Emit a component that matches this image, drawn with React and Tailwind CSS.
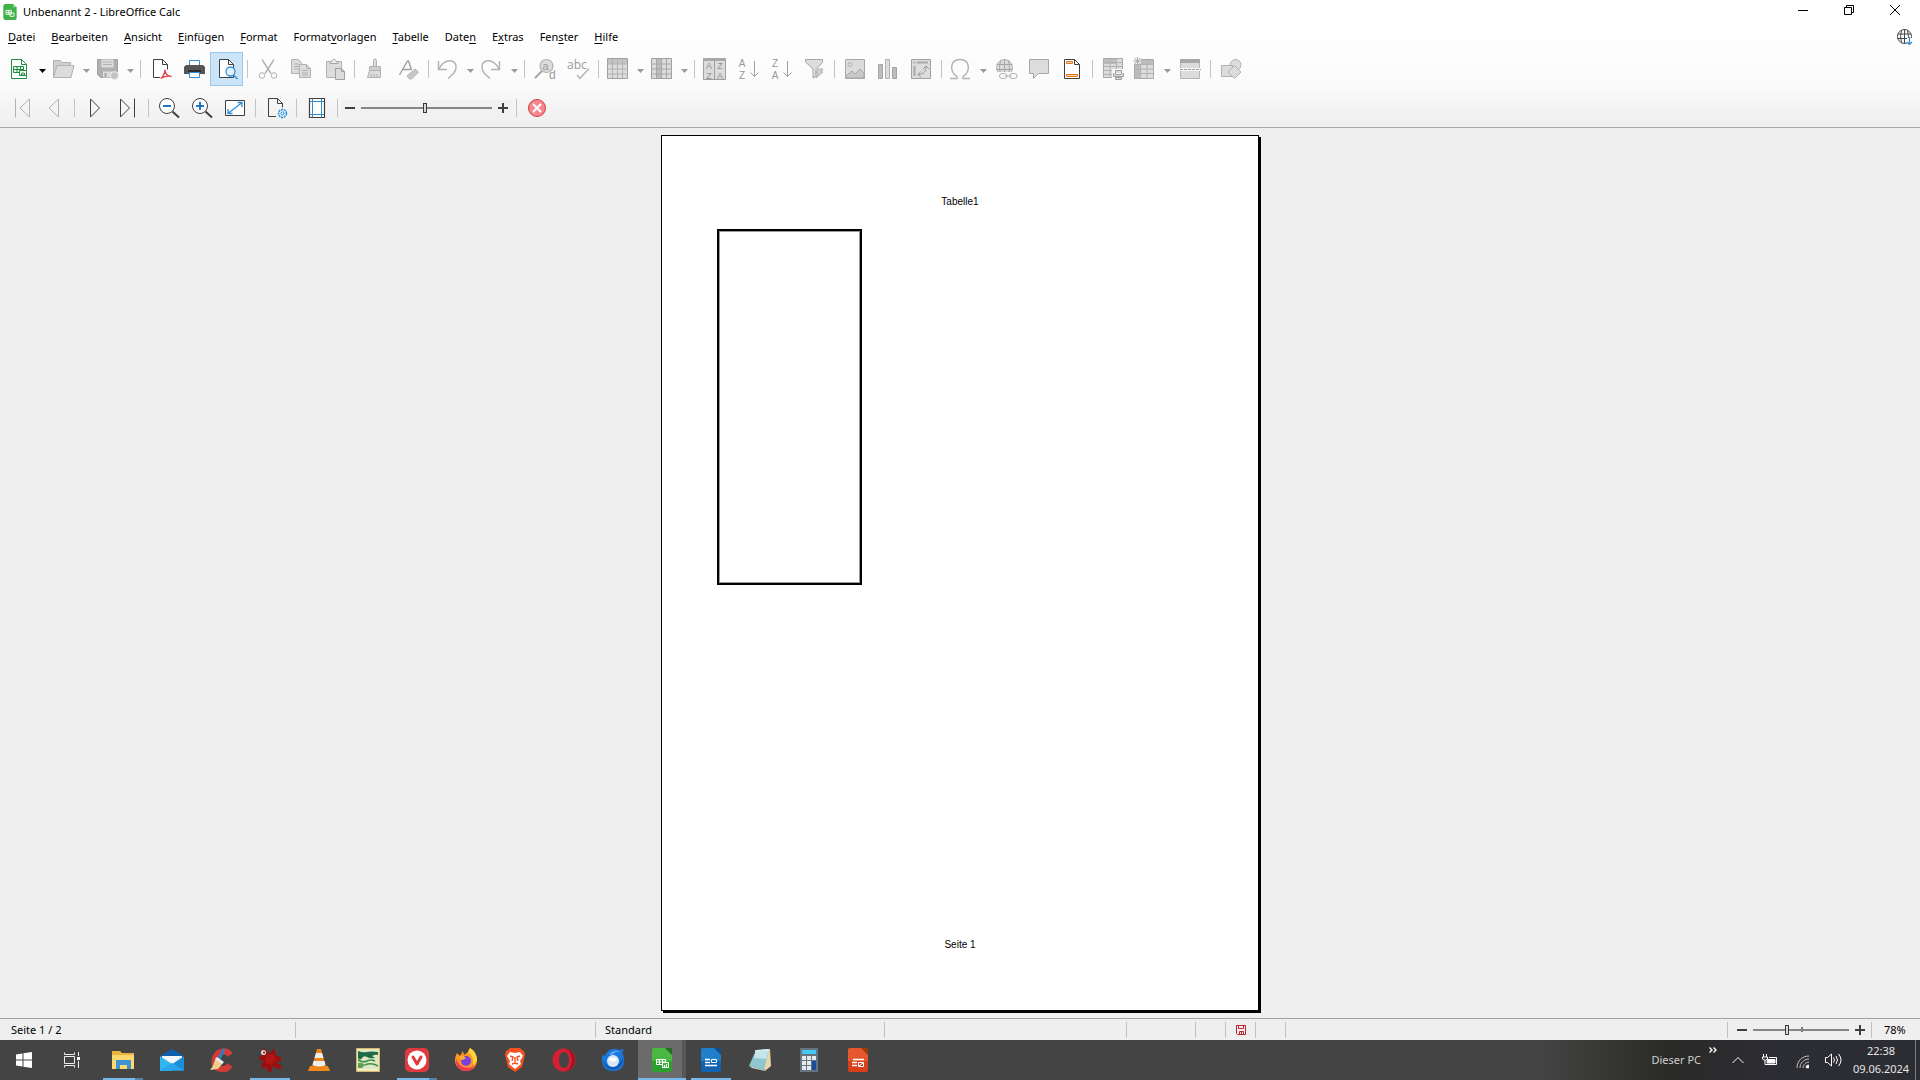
import React, { useState } from 'react';
import clsx from 'clsx';

const Icon = ({ children, className = 'size-6 shrink-0 overflow-visible' }) => (
    <svg viewBox="0 0 24 24" className={className} fill="none" aria-hidden="true">
        {children}
    </svg>
);

// --- TOOLBAR ICONS ---
const G = '#b2b2b2';
const F = '#dcdcdc';
const D = '#3f3f3f';
const B = '#2f8fd6';

const icons = {
    newSheet: (
        <Icon>
            <path d="M4.5 2.5h10l5 5v14h-15z" fill="#fff" stroke="#1e8e3e" />
            <path d="M14.5 2.5v5h5" stroke="#1e8e3e" />
            <path d="M6.500 9.500h10v6h-10z" fill="#e9f6ec" stroke="#1e8e3e" />
            <path d="M6.500 12.500h10M10 9.500v6M13.500 9.500v6" stroke="#1e8e3e" />
            <path d="M12.500 13.500h7v5h-7z" fill="#fff" stroke="#1e8e3e" />
            <path d="M14.500 18v-2M16 18v-3M17.500 18v-2" stroke="#1e8e3e" />
        </Icon>
    ),
    open: (
        <Icon>
            <path d="M2.500 19.500v-16h7l2 2h8v3" fill="#cfcfcf" stroke={G} />
            <path d="M2.500 20.500 6 8.500h17l-3 12z" fill={F} stroke={G} />
        </Icon>
    ),
    save: (
        <Icon>
            <path d="M2.500 2.500h20v18h-17l-3-3z" fill="#b0b0b0" stroke="#a0a0a0" />
            <path d="M6.500 2.500h12v8h-12z" fill={F} />
            <path d="M8 5h9M8 7.500h9" stroke={G} />
            <path d="M8 14.500h9v6H8z" fill={F} />
            <path d="M9.500 16h2v4h-2z" fill="#a8a8a8" />
            <circle cx="19.500" cy="18.500" r="4" fill="#c4c4c4" stroke="#efefef" />
        </Icon>
    ),
    pdf: (
        <Icon>
            <path d="M13 21.500H4.500v-18h9l5 5v5" fill="#fff" />
            <path d="M11 20.500H4.500v-18h9l5 5v5M13.500 2.500v5h5" stroke={D} />
            <path d="M11.500 21.500c2-1 4.500-5 4.500-9 0 4 2.500 6.500 6.500 7-4-1-8 .5-11 2z" stroke="#e2434b" strokeWidth="1.300" />
        </Icon>
    ),
    print: (
        <Icon>
            <path d="M7.500 8V3.500h10V8" fill="#fff" stroke={B} />
            <path d="M4 8h17l2 2v7H2v-7z" fill="#555" />
            <path d="M6 14h13" stroke="#2f2f2f" strokeWidth="2" />
            <path d="M7.500 15.500h10v5h-10z" fill="#fff" stroke={B} />
        </Icon>
    ),
    preview: (
        <Icon>
            <path d="M4.500 2.500h9l5 5v13h-14z" fill="#fff" stroke={D} />
            <path d="M13.500 2.500v5h5" stroke={D} />
            <circle cx="15.500" cy="14.500" r="4.500" fill="#e4f1fb" stroke={B} strokeWidth="1.300" />
            <path d="m18.500 18 4 4" stroke={B} strokeWidth="1.500" />
        </Icon>
    ),
    cut: (
        <Icon>
            <path d="m6 2.500 9 14M18 2.500l-9 14" stroke={G} strokeWidth="1.400" />
            <circle cx="6" cy="18.500" r="2.800" stroke={G} />
            <circle cx="18" cy="18.500" r="2.800" stroke={G} />
        </Icon>
    ),
    copy: (
        <Icon>
            <path d="M2.500 2.500h7l3 3v11h-10z" fill={F} stroke={G} />
            <path d="M5 7h5M5 9.500h5M5 12h5" stroke={G} />
            <path d="M10.500 7.500h7l4 4v9h-11z" fill={F} stroke={G} />
            <path d="M17.500 7.500v4h4M13 13.500h6M13 16h6M13 18h6" stroke={G} />
        </Icon>
    ),
    paste: (
        <Icon>
            <path d="M4.500 4.500h15v16h-15z" fill={F} stroke={G} />
            <path d="M8 6.500v-2h2c0-3 4-3 4 0h2v2z" fill="#eee" stroke="#a5a5a5" />
            <path d="M13.500 11.500h6l3 3v8h-9z" fill={F} stroke="#a0a0a0" />
            <path d="M19.500 11.500v3h3" stroke="#a0a0a0" />
        </Icon>
    ),
    brush: (
        <Icon>
            <path d="M10.500 9.500v-6a1.500 1.500 0 0 1 3 0v6" fill={F} stroke={G} />
            <path d="M6.500 9.500h11v4h-11z" fill="#cfcfcf" stroke={G} />
            <path d="M6.500 13.500h11v7h-13z" fill={F} stroke={G} />
            <path d="M8 20v-3M11 20v-3M14 20v-3" stroke={G} />
        </Icon>
    ),
    clear: (
        <Icon>
            <path d="m3.500 18 8-14h1l3 9M7 12.500h8" stroke="#a0a0a0" strokeWidth="1.400" />
            <path d="m11 19 8-7 3.500 3-7 7h-2z" fill="#c8c8c8" stroke={G} />
        </Icon>
    ),
    undo: (
        <Icon>
            <path d="M3.500 4v8.500H12M4 12c3-6 8-9 13-8 5 2 5 8 2 12-2 2-4 4-6 5.500" stroke={G} strokeWidth="1.400" />
        </Icon>
    ),
    redo: (
        <Icon>
            <path d="M20.500 4v8.500H12M20 12C17 6 12 3 7 4c-5 2-5 8-2 12 2 2 4 4 6 5.500" stroke={G} strokeWidth="1.400" />
        </Icon>
    ),
    find: (
        <Icon>
            <circle cx="13.500" cy="9" r="6.500" fill={F} stroke={G} strokeWidth="1.200" />
            <path d="m9 14-7 7" stroke="#a5a5a5" strokeWidth="2" />
            <text x="9.500" y="12.500" fontSize="11" fontFamily="Liberation Sans, sans-serif" fill="#999">a</text>
            <text x="16" y="22" fontSize="12" fontFamily="Liberation Sans, sans-serif" fill="#999">d</text>
        </Icon>
    ),
    spell: (
        <Icon>
            <text x="1" y="12" fontSize="12" fontFamily="Open Sans, sans-serif" fill="#999">abc</text>
            <path d="m11 18 3 3.500 9-10" stroke={G} strokeWidth="1.400" />
        </Icon>
    ),
    table: (
        <Icon>
            <path d="M2.500 1.500h20v20h-20z" fill={F} stroke="#a0a0a0" />
            <path d="M3 2h19v5H3z" fill="#c4c4c4" />
            <path d="M2.500 7h20M2.500 12h20M2.500 17h20M7.500 2v19M12.500 2v19M17.500 2v19" stroke={G} />
        </Icon>
    ),
    column: (
        <Icon>
            <path d="M2.500 1.500h20v20h-20z" fill={F} stroke="#a0a0a0" />
            <path d="M7 2h6v19H7z" fill="#bcbcbc" />
            <path d="M2.500 7h20M2.500 12h20M2.500 17h20M7.500 2v19M12.500 2v19M17.500 2v19" stroke="#a8a8a8" />
        </Icon>
    ),
    sort: (
        <Icon>
            <path d="M.5 1.500h22v21H.5z" fill={F} stroke="#a0a0a0" />
            <path d="M0 1h23v3H0z" fill="#a8a8a8" />
            <path d="M11.500 4v18" stroke="#a0a0a0" />
            <g fontSize="9" fontFamily="Liberation Sans, sans-serif" fill="#8f8f8f" textAnchor="middle">
                <text x="6" y="11.500">A</text>
                <text x="6" y="22">Z</text>
                <text x="17" y="11.500">Z</text>
                <text x="17" y="22">A</text>
            </g>
        </Icon>
    ),
    sortAsc: (
        <Icon>
            <g fontSize="10" fontFamily="Liberation Sans, sans-serif" fill="#999" textAnchor="middle">
                <text x="6" y="10">A</text>
                <text x="6" y="22">Z</text>
            </g>
            <path d="M18.500 4v15M14.500 15.500l4 4 4-4" stroke="#a0a0a0" />
        </Icon>
    ),
    sortDesc: (
        <Icon>
            <g fontSize="10" fontFamily="Liberation Sans, sans-serif" fill="#999" textAnchor="middle">
                <text x="6" y="10">Z</text>
                <text x="6" y="22">A</text>
            </g>
            <path d="M18.500 4v15M14.500 15.500l4 4 4-4" stroke="#a0a0a0" />
        </Icon>
    ),
    filter: (
        <Icon>
            <path d="M3.500 2.500h17v3l-6.500 7v7l-3 1.500v-9l-7.500-7z" fill={F} stroke="#a5a5a5" />
            <path d="M16 12h5l-2 3h2l-7 6 2-5h-2z" fill="#d0d0d0" stroke={G} />
        </Icon>
    ),
    image: (
        <Icon>
            <path d="M2.500 2.500h19v19h-19z" fill={F} stroke="#a8a8a8" />
            <circle cx="7" cy="7.500" r="2" stroke={G} />
            <path d="m3 19 6-5 3 3 5-5 4 4v5H3z" fill="#c8c8c8" stroke="#a8a8a8" />
        </Icon>
    ),
    chart: (
        <Icon>
            <path d="M2.500 7.500h4v14h-4zM16.500 10.500h4v11h-4z" fill="#bdbdbd" stroke="#a5a5a5" />
            <path d="M9.500 2.500h4v19h-4z" fill={F} stroke={G} />
        </Icon>
    ),
    pivot: (
        <Icon>
            <path d="M2.500 2.500h19v19h-19z" fill={F} stroke="#a0a0a0" />
            <path d="M4.500 5.500h2M8 5.500h11M5.500 9v10" stroke="#a8a8a8" strokeWidth="2" />
            <path d="M9 17.500c6 0 8-3 8-8M14 12l3-3 3 3M12 14.500l-3 3 3 3" stroke="#999" />
        </Icon>
    ),
    omega: (
        <Icon>
            <path d="M2 21.500h7v-2c-8-5-7-17 3-17s11 12 3 17v2h7" stroke={G} strokeWidth="1.400" />
        </Icon>
    ),
    link: (
        <Icon>
            <circle cx="10.500" cy="10.500" r="8" fill={F} stroke={G} />
            <path d="M3 7.500h15M2.500 12.500h16M10.500 2.500v16M7 3.500c-2 5-2 9 0 14M14 3.500c2 5 2 9 0 14" stroke="#a5a5a5" />
            <path d="M4 15h20v8H4z" fill="#f9f9f9" />
            <rect x="5.500" y="16.500" width="7.500" height="5" rx="2.500" stroke={G} />
            <rect x="15.500" y="16.500" width="7.500" height="5" rx="2.500" stroke={G} />
            <path d="M10.500 19h7" stroke={G} />
        </Icon>
    ),
    comment: (
        <Icon>
            <path d="M2.500 2.500h19v14h-10l-5 5v-5h-4z" fill={F} stroke="#a8a8a8" />
        </Icon>
    ),
    headerFooter: (
        <Icon>
            <path d="M4.500 2.500h10l5 5v14h-15z" fill="#fff" stroke={D} />
            <path d="M14.500 2.500v5h5" stroke={D} />
            <path d="M6.500 4.500h6v2h-6zM6.500 17.500h11v2h-11z" fill="#fbd3a8" stroke="#e07b1a" />
        </Icon>
    ),
    printArea: (
        <Icon>
            <path d="M2.500 1.500h19v19h-19z" fill={F} stroke="#a8a8a8" />
            <path d="M3 2h12v5H3z" fill="#bdbdbd" />
            <path d="M2.500 5.500h19M2.500 9.500h19M2.500 13.500h19M2.500 17.500h19M9 2v18M15.500 2v18" stroke={G} />
            <path d="M11 12h13v12H11z" fill="#f9f9f9" />
            <path d="M14.500 13.500h6v4h-6zM12.500 16v3.500h10V16M14.500 20.500h6v2h-6z" fill={F} stroke="#a0a0a0" />
        </Icon>
    ),
    freeze: (
        <Icon>
            <path d="M2.500 2.500h19v19h-19z" fill={F} stroke="#a8a8a8" />
            <path d="M3 8h5v13H3zM9 3h12v4H9z" fill="#bdbdbd" />
            <path d="M2.500 7.500h19M2.500 12h19M2.500 16.500h19M8.500 3v18M15 3v18" stroke={G} />
            <path d="M1 0h8v7H1z" fill="#fafafa" />
            <path d="M5.500 0v8M1.500 4h8M2.500 1l6 6M8.500 1l-6 6" stroke="#a5a5a5" />
        </Icon>
    ),
    split: (
        <Icon>
            <path d="M2.500 2.500h19v19h-19z" fill={F} stroke="#b5b5b5" />
            <path d="M2 2h20v4H2z" fill="#a8a8a8" />
            <path d="M1 11h22v3H1z" fill="#f9f9f9" />
            <path d="M2 12.500h21" stroke="#a0a0a0" strokeDasharray="3 1" />
        </Icon>
    ),
    shapes: (
        <Icon>
            <circle cx="16.500" cy="8" r="5.500" fill={F} stroke={G} />
            <path d="M2.500 8.500h11v11h-11z" fill={F} stroke={G} />
            <path d="m15.500 8.500 6.500 6.500-6.500 6.500L9 15z" fill={F} stroke={G} />
        </Icon>
    ),
    first: <Icon><path d="M6.500 2.500v19M20.500 3v18L11 12z" stroke={G} /></Icon>,
    prev: <Icon><path d="M16.500 3v18L7 12z" stroke={G} /></Icon>,
    next: <Icon><path d="M7.500 3v18l9-9z" stroke={D} /></Icon>,
    last: <Icon><path d="M4.500 3v18l9-9zM18.500 2.500v19" stroke={D} /></Icon>,
    zoomOut: (
        <Icon>
            <circle cx="10" cy="10" r="7.500" fill="#fff" stroke={D} />
            <path d="m15.500 15.500 6.500 6" stroke={D} strokeWidth="2" />
            <path d="M6 10h8" stroke="#1e77c0" strokeWidth="2" />
        </Icon>
    ),
    zoomIn: (
        <Icon>
            <circle cx="10" cy="10" r="7.500" fill="#fff" stroke={D} />
            <path d="m15.500 15.500 6.500 6" stroke={D} strokeWidth="2" />
            <path d="M6 10h8M10 6v8" stroke="#1e77c0" strokeWidth="2" />
        </Icon>
    ),
    fullScreen: (
        <Icon>
            <path d="M2.500 4.500h19v15h-19z" fill="#fff" stroke={D} />
            <path d="m5.500 17 13-10M5 13v4.500h4.500M14.500 6.500H19V11" stroke={B} strokeWidth="1.300" />
        </Icon>
    ),
    pageSettings: (
        <Icon>
            <path d="M12 20.500H4.500v-18h9l5 5v4M13.500 2.500v5h5" stroke={D} />
            <circle cx="18.500" cy="17.500" r="4" fill="#d8ebf9" stroke={B} strokeWidth="1.500" strokeDasharray="2 .8" />
            <circle cx="18.500" cy="17.500" r="1.500" fill="#fff" stroke={B} />
        </Icon>
    ),
    margins: (
        <Icon>
            <path d="M4.500 2.500h15v19h-15z" fill="#fff" stroke={D} strokeWidth="1.200" />
            <path d="M7.500 3v18M16.500 3v18M5 5.500h14M5 18.500h14" stroke={B} />
        </Icon>
    ),
    close: (
        <Icon>
            <circle cx="12" cy="12" r="8.500" fill="#f58a8e" stroke="#d23c42" />
            <path d="m8 8 8 8M16 8l-8 8" stroke="#fff" strokeWidth="2" />
        </Icon>
    ),
};

const mainToolbar = [
    { icon: 'newSheet', label: 'Neu', drop: true, enabled: true },
    { icon: 'open', label: 'Öffnen', drop: true },
    { icon: 'save', label: 'Speichern', drop: true },
    null,
    { icon: 'pdf', label: 'Als PDF exportieren' },
    { icon: 'print', label: 'Drucken' },
    { icon: 'preview', label: 'Druckvorschau', active: true },
    null,
    { icon: 'cut', label: 'Ausschneiden' },
    { icon: 'copy', label: 'Kopieren' },
    { icon: 'paste', label: 'Einfügen' },
    null,
    { icon: 'brush', label: 'Format übertragen' },
    { icon: 'clear', label: 'Direkte Formatierung löschen' },
    null,
    { icon: 'undo', label: 'Rückgängig', drop: true },
    { icon: 'redo', label: 'Wiederherstellen', drop: true },
    null,
    { icon: 'find', label: 'Suchen und Ersetzen' },
    { icon: 'spell', label: 'Rechtschreibung' },
    null,
    { icon: 'table', label: 'Zeile', drop: true },
    { icon: 'column', label: 'Spalte', drop: true },
    null,
    { icon: 'sort', label: 'Sortieren' },
    { icon: 'sortAsc', label: 'Aufsteigend sortieren' },
    { icon: 'sortDesc', label: 'Absteigend sortieren' },
    { icon: 'filter', label: 'AutoFilter' },
    null,
    { icon: 'image', label: 'Bild einfügen' },
    { icon: 'chart', label: 'Diagramm einfügen' },
    { icon: 'pivot', label: 'Pivot-Tabelle' },
    null,
    { icon: 'omega', label: 'Sonderzeichen', drop: true },
    { icon: 'link', label: 'Hyperlink' },
    { icon: 'comment', label: 'Kommentar' },
    { icon: 'headerFooter', label: 'Kopf- und Fußzeilen' },
    null,
    { icon: 'printArea', label: 'Druckbereich' },
    { icon: 'freeze', label: 'Fixieren', drop: true },
    { icon: 'split', label: 'Fenster teilen' },
    null,
    { icon: 'shapes', label: 'Zeichenfunktionen' },
];

const navButtons = [
    { icon: 'first', label: 'Erste Seite' },
    { icon: 'prev', label: 'Vorherige Seite' },
    null,
    { icon: 'next', label: 'Nächste Seite' },
    { icon: 'last', label: 'Letzte Seite' },
    null,
    { icon: 'zoomOut', label: 'Verkleinern' },
    { icon: 'zoomIn', label: 'Vergrößern' },
    { icon: 'fullScreen', label: 'Ganzer Bildschirm' },
    null,
    { icon: 'pageSettings', label: 'Seite formatieren' },
    null,
    { icon: 'margins', label: 'Seitenränder' },
    null,
];

// text before the mnemonic, the mnemonic, text after it
const menus = [
    ['', 'D', 'atei'],
    ['', 'B', 'earbeiten'],
    ['', 'A', 'nsicht'],
    ['', 'E', 'infügen'],
    ['', 'F', 'ormat'],
    ['Format', 'v', 'orlagen'],
    ['', 'T', 'abelle'],
    ['Date', 'n', ''],
    ['E', 'x', 'tras'],
    ['Fen', 's', 'ter'],
    ['', 'H', 'ilfe'],
];

const Separator = () => (
    <div className="flex w-2 shrink-0 justify-center">
        <div className="h-[18px] w-px bg-[#c3c3c3]"></div>
    </div>
);

const ToolButton = ({ item }) => {
    if (item.drop) {
        return (
            <button aria-label={item.label} className="flex h-[34px] w-11 shrink-0 items-center pl-[3px]">
                {icons[item.icon]}
                <svg viewBox="0 0 7 4" className={clsx('mt-1 ml-2 h-1 w-[7px]', item.enabled ? 'text-black' : 'text-[#9a9a9a]')} aria-hidden="true">
                    <path d="M0 0h7L3.500 4z" fill="currentColor" />
                </svg>
            </button>
        );
    }
    return (
        <button
            aria-label={item.label}
            className={clsx(
                'flex h-[34px] w-[33px] shrink-0 items-center justify-center',
                item.active && 'border border-[#99c9ef] bg-[#cce4f7]'
            )}
        >
            {icons[item.icon]}
        </button>
    );
};

const ZoomSlider = ({ label, value, onChange, className, tick }) => (
    <div className={clsx('flex items-center', className)}>
        <button aria-label={`${label} verkleinern`} className="flex w-[10px] justify-center">
            <span className="h-[2px] w-[10px] bg-[#3f3f3f]"></span>
        </button>
        <div className="relative mx-[6px] flex flex-1 items-center">
            {tick && <span className="absolute left-1/2 h-[5px] w-[2px] bg-[#7a7a7a]"></span>}
            <input
                type="range"
                aria-label={label}
                min="0"
                max="100"
                value={value}
                onChange={(e) => onChange(Number(e.target.value))}
                className="relative h-3 w-full min-w-0 appearance-none bg-transparent [&::-webkit-slider-runnable-track]:h-[2px] [&::-webkit-slider-runnable-track]:bg-[#858585] [&::-webkit-slider-thumb]:-mt-1 [&::-webkit-slider-thumb]:h-[10px] [&::-webkit-slider-thumb]:w-1 [&::-webkit-slider-thumb]:appearance-none [&::-webkit-slider-thumb]:border [&::-webkit-slider-thumb]:border-[#3a3a3a] [&::-webkit-slider-thumb]:bg-[#d8d8d8]"
            />
        </div>
        <button aria-label={`${label} vergrößern`} className="flex w-[10px] justify-center">
            <svg viewBox="0 0 10 10" className="size-[10px]" aria-hidden="true">
                <path d="M0 5h10M5 0v10" stroke="#3f3f3f" strokeWidth="2" />
            </svg>
        </button>
    </div>
);

// --- TASKBAR ---
const LibreIcon = ({ top, bottom, fold, children }) => (
    <Icon>
        <path d="M2 2q0-2 2-2h12l6 7v15q0 2-2 2H4q-2 0-2-2z" fill={bottom} />
        <path d="M2 2q0-2 2-2h12l6 7v6H2z" fill={top} opacity=".6" />
        <path d="M15 0h7v7z" fill={fold} />
        {children}
    </Icon>
);

const apps = [
    {
        name: 'Explorer', running: true, grouped: true,
        icon: (
            <Icon>
                <path d="M1 3h8l2 2h12v16H1z" fill="#e9b43c" />
                <path d="M1 7h22v14H1z" fill="#fcd970" />
                <path d="M5 12h15v9h-4v-4H9v4H5z" fill="#3e93d3" />
            </Icon>
        ),
    },
    {
        name: 'Mail',
        icon: (
            <Icon>
                <path d="M0 8 12 1l12 7z" fill="#0f5fae" />
                <path d="M2 8h20v8H2z" fill="#f4f8fc" />
                <path d="M0 8l12 8v7H0z" fill="#35b5ee" />
                <path d="M24 8 3 22.500h21z" fill="#1b90da" />
                <path d="M0 22.500 12 15l12 7.500z" fill="#2aa5ea" />
            </Icon>
        ),
    },
    {
        name: 'CCleaner',
        icon: (
            <Icon>
                <path d="M21 7c-3-5-11-5-14 1s-1 12 5 13c4 1 7-1 9-4" stroke="#d43c38" strokeWidth="6" />
                <path d="m15 1-5 10" stroke="#2c7fc4" strokeWidth="3" />
                <path d="m7 10 7 5-5 6-8 1c3-3 4-8 6-12z" fill="#f0cf8a" />
                <path d="m8 9 7 5-2 2-7-5z" fill="#e8eef4" />
            </Icon>
        ),
    },
    {
        name: 'IrfanView', running: true,
        icon: (
            <Icon>
                <path d="M3 3q3-4 6 0l2 3 4-5q3 1 2 6l6 2v4l-5 1 6 4-2 4-7-4-2 6-4-1v-4l-5 2-1-5 4-3-6-1 1-4 4-1z" fill="#9a0f0f" />
                <path d="m8 7 7-1 3 6-5 5-6-3z" fill="#b51414" />
                <circle cx="5.500" cy="4.500" r="2.500" fill="#f6dcdc" />
                <circle cx="6" cy="4.500" r="1" fill="#400" />
            </Icon>
        ),
    },
    {
        name: 'VLC',
        icon: (
            <Icon>
                <path d="M3 18h18l2 5H1z" fill="#f08a1c" />
                <path d="M10 1h4l5 18q-7 4-14 0z" fill="#f0861a" />
                <path d="m9 5-1.500 5h9L15 5zM6.500 13 5.500 17q6.500 3 13 0l-1-4z" fill="#eee" />
            </Icon>
        ),
    },
    {
        name: 'Bild',
        icon: (
            <Icon>
                <path d="M.5.5h23v23H.5z" fill="#dfe8c2" stroke="#d8b866" />
                <path d="M2 3q5 2 9 1t11 0v3q-3-1-6 1l3 2q-5 1-8-1t-5 1-4 0z" fill="#1f6a48" />
                <path d="M2 12q5 3 9 1t8 0M9 17q6-3 13 1" stroke="#3f8f4c" strokeWidth="1.500" />
                <path d="M2 15q4-1 7 2l-3 3H2z" fill="#5f9f58" />
                <path d="M2 21h20v1.500H2z" fill="#eef2c2" />
            </Icon>
        ),
    },
    {
        name: 'Vivaldi', running: true, grouped: true,
        icon: (
            <Icon>
                <rect width="24" height="24" rx="5" fill="#e03a3e" />
                <circle cx="12" cy="12" r="9.500" fill="#fff" />
                <path d="m8 9 4 7 4-7" stroke="#e03a3e" strokeWidth="3" strokeLinecap="round" strokeLinejoin="round" />
            </Icon>
        ),
    },
    {
        name: 'Firefox',
        icon: (
            <Icon>
                <path d="M3 5l3 3 3-5 1 4 4-3 2-4c5 3 7 8 7 12 0 7-5 11-11 11S1 18 1 12c0-3 1-5 2-7z" fill="#ff9626" />
                <path d="M2 10c2 9 12 13 19 7-2 4-5 6-9 6C6 23 1 18 2 10z" fill="#f5364f" />
                <path d="m16 0c5 3 7 8 7 12-1 3-3 4-4 5 1-6-1-10-5-13z" fill="#ffd43a" />
                <circle cx="12" cy="13" r="5" fill="#7b3fe0" />
                <path d="M6 8q3-1 6 2-2 2-5 2z" fill="#ffb12a" />
            </Icon>
        ),
    },
    {
        name: 'Brave',
        icon: (
            <Icon>
                <path d="m7 0h10l2 2 2 1 1 4-3 12-7 5-7-5L2 7l1-4 2-1z" fill="#f4511e" />
                <path d="m7 4 5 1 5-1 3 4-3 5 1 3-6 5-6-5 1-3-3-5z" fill="#fff" />
                <path d="m7 8 3 1-1 4M17 8l-3 1 1 4M9 16l3-1 3 1M12 9v5" stroke="#f4511e" strokeWidth="1.400" />
            </Icon>
        ),
    },
    {
        name: 'Opera',
        icon: (
            <Icon>
                <path fillRule="evenodd" d="M12 .5a11.500 11.500 0 1 0 0 23 11.500 11.500 0 0 0 0-23zm0 3.500c3 0 5 3.500 5 8s-2 8-5 8-5-3.500-5-8 2-8 5-8z" fill="#d61f30" />
                <path d="M14 1c12 2 12 20 0 22 8-5 8-17 0-22z" fill="#a01222" />
            </Icon>
        ),
    },
    {
        name: 'Thunderbird',
        icon: (
            <Icon>
                <path d="M1 7l3 1c2-6 9-9 13-6l6-1-2 4c2 2 2 5 2 8 0 7-5 10-11 10S1 19 1 13z" fill="#1a78dc" />
                <path d="M2 12c1 8 8 11 13 9 6-2 8-7 7-13-1 6-5 11-11 11-4 0-7-3-9-7z" fill="#1558b4" />
                <path d="M8 6q5-4 11-3-6 1-8 4z" fill="#63b0f5" />
                <circle cx="12" cy="13" r="6" fill="#d6e8fc" />
                <path d="M7.500 11q4.500 6 9 0-4.500-3-9 0z" fill="#fff" />
            </Icon>
        ),
    },
    {
        name: 'Calc', running: true, active: true,
        icon: (
            <LibreIcon top="#5cc94e" bottom="#2e9e31" fold="#276b2a">
                <path d="M6.500 11.500h9v5h-9zM6.500 14h9M9.500 11.500v5M12.500 11.500v5" stroke="#fff" />
                <path d="M12.500 14.500h6v5h-6zM14.500 19v-2M16.500 19v-3" fill="#44ad40" stroke="#fff" />
            </LibreIcon>
        ),
    },
    {
        name: 'Writer', running: true,
        icon: (
            <LibreIcon top="#2a92dd" bottom="#1163b0" fold="#12508c">
                <path d="M6 11.500h5M6 14.500h5M6 17.500h12" stroke="#fff" strokeWidth="1.500" />
                <path d="M12.500 11.500h5v3h-5z" stroke="#fff" />
            </LibreIcon>
        ),
    },
    {
        name: 'Editor',
        icon: (
            <Icon>
                <path d="m8 3 14-2 1 17-6 5z" fill="#e8d6ac" />
                <path d="m8 2 13-1-5 21L1 18z" fill="#8fc6cf" />
                <path d="m8 2 13-1-3 10-12-1z" fill="#c4e6ea" />
                <path d="m7 3 14-1" stroke="#e9f1f2" strokeWidth="1.500" strokeDasharray="1 1" />
                <path d="m1 18 15 4 1 1-13-3z" fill="#ddd" />
            </Icon>
        ),
    },
    {
        name: 'Rechner',
        icon: (
            <Icon>
                <path d="M3 0h18v24H3z" fill="#66747f" />
                <path d="M5 2h14v4H5z" fill="#47c8f4" />
                <path d="M5 8h4v4H5zM10 8h4v4h-4zM15 8h4v4h-4zM5 13h4v4H5zM10 13h4v4h-4zM5 18h4v4H5zM10 18h4v4h-4z" fill="#e6eaed" />
                <path d="M15 13h4v9h-4z" fill="#1a4c9c" />
            </Icon>
        ),
    },
    {
        name: 'Impress',
        icon: (
            <LibreIcon top="#f0683a" bottom="#d8401c" fold="#9a3b12">
                <path d="M7 11.500h11M6 14.500h5M6 17.500h5" stroke="#fff" strokeWidth="1.500" />
                <path d="M12.500 14.500h5v4h-5zM13 18l4-3" stroke="#fff" />
            </LibreIcon>
        ),
    },
];

const TaskbarApp = ({ app }) => (
    <button aria-label={app.name} className={clsx('flex h-10 w-12 flex-col items-center justify-end', app.active && 'bg-[#6b6b6b] shadow-[inset_-4px_0_0_#575757]')}>
        <span className="flex flex-1 items-center">{app.icon}</span>
        <span className={clsx('-mt-[2px] flex h-[2px]', app.active ? 'w-full' : 'w-10')}>
            {app.running && <span className="flex-1 bg-[#76b9ed]"></span>}
            {app.grouped && <span className="w-2 bg-[#5583a6]"></span>}
        </span>
    </button>
);

const TitleBar = () => (
    <div className="flex h-[23px] items-start">
        <div className="flex h-[23px] flex-1 items-center gap-[5px] pl-[2px]">
            <Icon className="size-4">
                <path d="M2 3q0-3 3-3h12l5 5v16q0 3-3 3H5q-3 0-3-3z" fill="#3fb24a" />
                <path d="M17 0l5 5h-5z" fill="#a5dfa0" />
                <path d="M6 9.500h8v6H6zM6 12.500h8M10 9.500v6M12 13.500h6v5h-6z" stroke="#fff" strokeWidth="1.300" />
            </Icon>
            <h1 className="text-[11px] leading-4">Unbenannt 2 - LibreOffice Calc</h1>
        </div>
        <div className="flex pr-[2px]">
            <button aria-label="Minimieren" className="flex h-5 w-[46px] items-center justify-center">
                <span className="h-px w-[10px] bg-black"></span>
            </button>
            <button aria-label="Wiederherstellen" className="flex h-5 w-[46px] items-center justify-center">
                <svg viewBox="0 0 10 10" className="size-[10px]" fill="none" stroke="#000" aria-hidden="true">
                    <path d="M.5 2.500h7v7h-7zM2.500 2.500v-2h7v7h-2" />
                </svg>
            </button>
            <button aria-label="Schließen" className="flex h-5 w-[46px] items-center justify-center">
                <svg viewBox="0 0 10 10" className="size-[10px]" fill="none" stroke="#000" aria-hidden="true">
                    <path d="m0 0 10 10M10 0 0 10" />
                </svg>
            </button>
        </div>
    </div>
);

const MenuBar = () => (
    <nav className="flex h-[27px] items-center justify-between pr-[7px] pl-2">
        <div className="flex gap-4">
            {menus.map(([before, key, after]) => (
                <button key={before + key + after} className="text-[11px] leading-4">
                    {before}
                    <span className="underline underline-offset-2">{key}</span>
                    {after}
                </button>
            ))}
        </div>
        <button aria-label="Update verfügbar">
            <svg viewBox="0 0 16 16" className="size-4" fill="none" aria-hidden="true">
                <circle cx="7.500" cy="7.500" r="7" stroke="#444" />
                <path d="M1 5h13M.5 9.500h14M7.500.5v14M4.500 1.500q-2 6 0 12M10.500 1.500q2 6 0 12" stroke="#444" />
                <path d="M10 9h5v7h-5z" fill="#fff" />
                <path d="M12.500 8v7.500M10 13l2.500 2.500L15 13" stroke={B} strokeWidth="1.300" />
            </svg>
        </button>
    </nav>
);

const SheetPreview = () => (
    <main className="flex flex-1 justify-center bg-[#efefef] py-[7px]">
        <article className="flex h-[876px] w-[598px] flex-col border border-black bg-white px-[55px] pt-[60px] pb-[59px] text-center font-['Liberation_Sans',sans-serif] text-[10px] leading-3 shadow-[2px_2px_0_#000]">
            <header>Tabelle1</header>
            <div className="mt-[21px] h-[356px] w-[145px] border-2 border-black shadow-[inset_0_0_0_1px_#9a9a9a]"></div>
            <footer className="mt-auto">Seite 1</footer>
        </article>
    </main>
);

const StatusCell = ({ className, children }) => (
    <div className={clsx('flex h-4 shrink-0 items-center border-r border-[#c0c0c0]', className)}>{children}</div>
);

const StatusBar = ({ zoom, setZoom }) => (
    <div className="flex h-[22px] items-center border-t border-[#a0a0a0] bg-[#efefef] text-[11px] leading-4">
        <StatusCell className="w-[296px] pl-[11px]">Seite 1 / 2</StatusCell>
        <StatusCell className="w-[300px]" />
        <StatusCell className="w-[289px] pl-[9px]">Standard</StatusCell>
        <StatusCell className="w-[242px]" />
        <StatusCell className="w-[69px]" />
        <StatusCell className="w-[30px]" />
        <StatusCell className="w-[30px] justify-center">
            <svg viewBox="0 0 10 10" className="size-[10px]" fill="none" stroke="#c0242c" aria-hidden="true">
                <path d="M.5.5h9v9h-8l-1-1zM2.500.5v3h5v-3M3.500 9.500v-3h4v3M5.500 7v2" />
            </svg>
        </StatusCell>
        <StatusCell className="w-[30px]" />
        <StatusCell className="flex-1" />
        <StatusCell className="w-36 pr-[6px] pl-[9px]">
            <ZoomSlider label="Maßstab" value={zoom} onChange={setZoom} className="w-full" tick />
        </StatusCell>
        <div className="w-12 pl-3">78%</div>
    </div>
);

const Taskbar = () => (
    <footer className="flex h-10 items-stretch justify-between bg-linear-to-r from-[#444444] from-80% via-[#2a2a27] via-87% to-[#2c2c33] to-92% text-[#e6e6e6]">
        <div className="flex">
            <button aria-label="Start" className="flex w-12 items-center justify-center">
                <svg viewBox="0 0 16 16" className="size-4" fill="#fff" aria-hidden="true">
                    <path d="M0 2.500 6.500 1.500v6H0zM7.500 1.300 16 0v7.500H7.500zM0 8.500h6.500v6L0 13.500zM7.500 8.500H16V16l-8.500-1.300z" />
                </svg>
            </button>
            <button aria-label="Aktive Anwendungen" className="flex w-12 items-center justify-center">
                <svg viewBox="0 0 16 16" className="size-4" fill="none" stroke="#eee" aria-hidden="true">
                    <path d="M.5.5v2h10v-2M.5 4.500h10v7H.5zM.5 15.500v-2h10v2M14.500 0v4M14.500 9v7" />
                    <path d="M13 5h3v3h-3z" fill="#fff" stroke="none" />
                </svg>
            </button>
            <div className="ml-[3px] flex gap-px">
                {apps.map((app) => <TaskbarApp key={app.name} app={app} />)}
            </div>
        </div>
        <div className="flex items-center">
            <span className="text-[11px] leading-4 text-[#cfcfcf]">Dieser PC</span>
            <svg viewBox="0 0 8 6" className="mb-5 ml-2 h-[6px] w-2" fill="none" stroke="#fff" strokeWidth="1.400" aria-hidden="true">
                <path d="m.5.500 2.500 2.500L.5 5.500M4.500.5 7 3 4.500 5.500" />
            </svg>
            <button aria-label="Ausgeblendete Symbole" className="ml-[15px] flex">
                <svg viewBox="0 0 12 8" className="h-2 w-3" fill="none" stroke="#fff" aria-hidden="true">
                    <path d="m.5 7 5.500-5.500L11.500 7" />
                </svg>
            </button>
            <svg viewBox="0 0 16 12" className="ml-[18px] h-3 w-4" fill="none" stroke="#fff" aria-hidden="true">
                <path d="M1.500 0v3M4.500 0v3M.5 3h5v2L3 6.500.5 5zM3 6v4.500h11.500v-7H7" />
                <path d="M5.500 5.500h7.500V9H5z" fill="#fff" />
            </svg>
            <svg viewBox="0 0 14 14" className="mt-1 ml-[18px] size-[14px]" fill="none" stroke="#c4c4c4" aria-hidden="true">
                <path d="M1 13C1 6 6 1 13 1M4 13c0-5 4-9 9-9M7 13c0-3 3-6 6-6" />
                <path d="M10 12.500q0-2.500 2.500-2.500v3z" fill="#fff" stroke="#fff" />
            </svg>
            <svg viewBox="0 0 17 14" className="ml-[15px] h-[14px] w-[17px]" fill="none" stroke="#fff" aria-hidden="true">
                <path d="M.5 4.500h2l4-3.500v12l-4-3.500h-2zM8.500 4.500q2 2.500 0 5M11 3q3 4 0 8M13.500 1q5 6 0 12" />
            </svg>
            <time className="ml-[9px] w-[60px] text-center text-[11px] leading-[18px]">
                22:38<br />09.06.2024
            </time>
            <div className="mr-1 ml-1 h-10 w-px bg-[#7c7c80]"></div>
        </div>
    </footer>
);

const App = () => {
    const [previewScale, setPreviewScale] = useState(49);
    const [zoom, setZoom] = useState(35);

    return (
        <div className="flex min-h-screen flex-col font-['Noto_Sans',sans-serif] text-black">
            <div className="border-b border-[#a8a8a8] bg-linear-to-b from-white from-20% via-[#fbfbfb] via-65% to-[#efefef]">
                <TitleBar />
                <MenuBar />
                <div className="flex h-[38px] items-center pl-1">
                    {mainToolbar.map((item, i) => (item ? <ToolButton key={item.icon} item={item} /> : <Separator key={i} />))}
                </div>
                <div className="flex h-[39px] items-center pl-1">
                    {navButtons.map((item, i) => (item ? <ToolButton key={item.icon} item={item} /> : <Separator key={i} />))}
                    <ZoomSlider label="Vorschaumaßstab" value={previewScale} onChange={setPreviewScale} className="h-4 w-[171px] bg-[#f1f1f1] px-1" />
                    <Separator />
                    <ToolButton item={{ icon: 'close', label: 'Vorschau schließen' }} />
                </div>
            </div>
            <SheetPreview />
            <StatusBar zoom={zoom} setZoom={setZoom} />
            <Taskbar />
        </div>
    );
};

export default App;
